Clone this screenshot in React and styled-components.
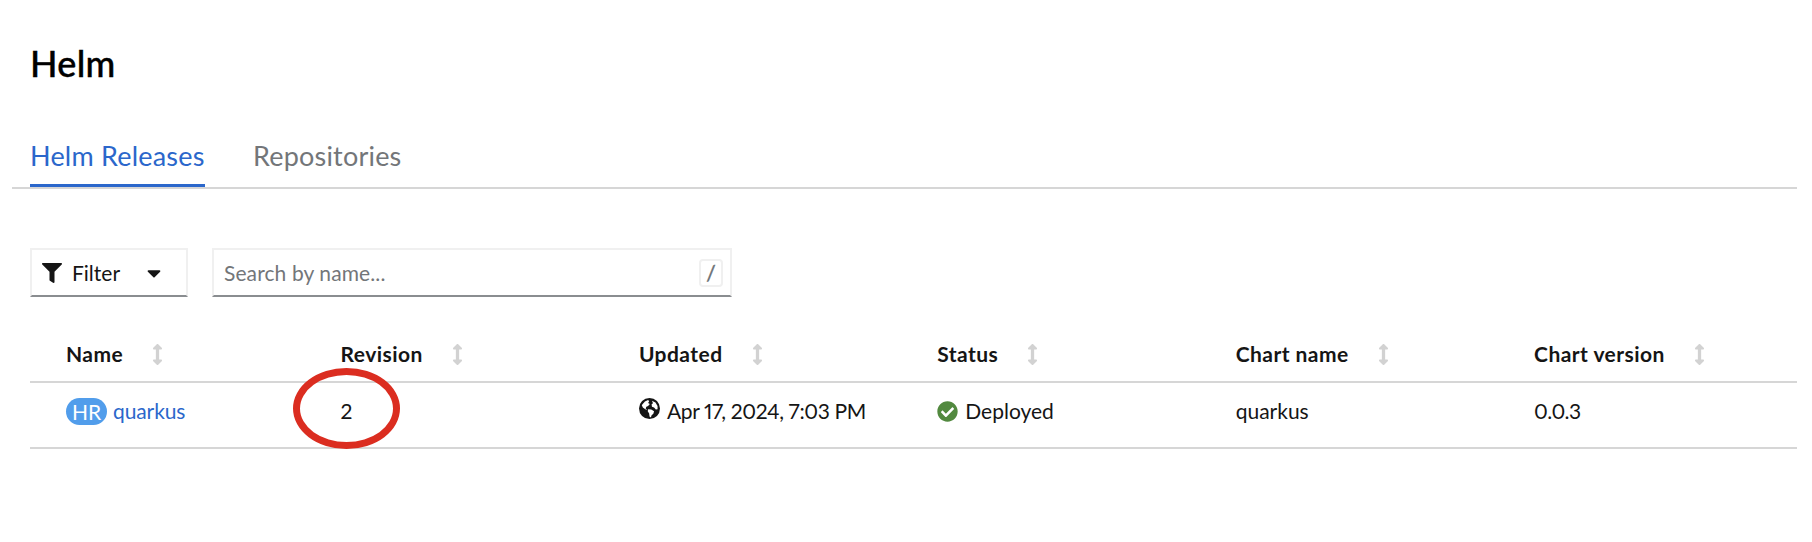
import React from "react";
import styled, { createGlobalStyle } from "styled-components";
import { FaFilter, FaCaretDown, FaArrowsAltV, FaCheckCircle } from "react-icons/fa";

const Global = createGlobalStyle`
  * { box-sizing: border-box; }
  body { margin: 0; background: #fff; color: #151515; font: 21px/32px Lato, sans-serif; font-variant-numeric: proportional-nums; }
`;
const Page = styled.main`padding: 41px 15px 0 12px;`;
const Title = styled.h1`
  margin: 0 0 0 18px; font-size: 36px; font-weight: 500; line-height: 44px; color: #000;
  letter-spacing: .3px; -webkit-text-stroke: .4px #000;
`;
const Tabs = styled.nav`
  display: flex; gap: 48px; margin-top: 40px; padding-left: 18px; height: 64px; border-bottom: 2px solid #d6d6d6;
`;
const Tab = styled.a`
  width: ${p => p.$width}px; height: 62px; padding-top: 11px; font-size: 27px; line-height: 40px;
  letter-spacing: .2px; white-space: nowrap;
  color: ${p => (p.$active ? "#2b67cb" : "#737679")};
  border-bottom: 3px solid ${p => (p.$active ? "#2b67cb" : "transparent")};
`;
const Toolbar = styled.div`display: flex; gap: 24px; margin: 59px 0 0 18px;`;
const Control = styled.div`
  display: flex; align-items: center; height: 49px; width: ${p => p.$width}px; padding: 0 7px 0 10px;
  border: 2px solid #f0f0f0; border-bottom-color: #8a8d90;
`;
const Label = styled.span`margin: 0 23px 0 10px;`;
const Placeholder = styled.span`flex: 1; color: #737679; letter-spacing: .1px;`;
const Key = styled.kbd`
  width: 24px; height: 28px; border: 2px solid #f0f0f0; border-radius: 4px;
  font: 21px/23px Lato, sans-serif; text-align: center; color: #6a6e73; -webkit-text-stroke: .4px #6a6e73;
`;
const Table = styled.div`margin: 23px 0 0 18px;`;
const Row = styled.div`
  display: grid; grid-template-columns: 274.5px 298.4px 298.4px 298.4px 298.4px 1fr; align-items: center;
  height: ${p => p.$height}px; padding: ${p => p.$top || 0}px 0 ${p => p.$bottom || 0}px 36px;
  border-bottom: 2px solid #d6d6d6;
`;
const Head = styled.div`
  display: flex; align-items: center; gap: 24px; font-weight: 700; letter-spacing: .45px;
  svg { color: #d2d2d2; }
`;
const Cell = styled.div`
  display: flex; align-items: center; gap: ${p => p.$gap || 0}px; letter-spacing: ${p => p.$track || 0}px;
`;
const Badge = styled.span`
  width: 41px; height: 27px; border-radius: 14px; background: #519deb; color: #fff;
  text-align: center; line-height: 27px;
`;
const Link = styled.a`color: #2b67cb; letter-spacing: -.1px;`;
const Marked = styled.span`position: relative;`;
const Ring = styled.span`
  position: absolute; left: -48px; top: -27px; width: 107px; height: 81px;
  border: 7px solid #db2d20; border-radius: 50%;
`;
const GlobeSvg = styled.svg`width: 21px; height: 21px; margin-bottom: 6px;`;

const Globe = () => (
  <GlobeSvg viewBox="0 0 60 60">
    <circle cx="30" cy="30" r="30" fill="#151515" />
    <path fill="#fff" d="M10 18 17 10l9-4 3 3-3 5 5 3-5 6-5 2-2 5 5 4-6-2-7-5-3-6z" />
    <path fill="#fff" d="m26 32 9 1 8 5-2 7-5 4-2 7-4-3-1-9-4-6z" />
    <path fill="#fff" d="m37 8 10 5 6 10v9l-5 1-5-6-6-2-1-7 4-3z" />
  </GlobeSvg>
);

const columns = ["Name", "Revision", "Updated", "Status", "Chart name", "Chart version"];

export default function App() {
  return (
    <>
      <Global />
      <Page>
        <Title>Helm</Title>
        <Tabs>
          <Tab $active $width={175}>Helm Releases</Tab>
          <Tab $width={150}>Repositories</Tab>
        </Tabs>
        <Toolbar>
          <Control $width={158}><FaFilter size={20} /><Label>Filter</Label><FaCaretDown size={22} /></Control>
          <Control $width={520}><Placeholder>Search by name...</Placeholder><Key>/</Key></Control>
        </Toolbar>
        <Table>
          <Row $height={63} $top={7}>
            {columns.map(name => <Head key={name}><span>{name}</span><FaArrowsAltV size={21} /></Head>)}
          </Row>
          <Row $height={66} $bottom={8}>
            <Cell $gap={6}><Badge>HR</Badge><Link>quarkus</Link></Cell>
            <Cell><Marked>2<Ring /></Marked></Cell>
            <Cell $gap={7} $track={-0.35}><Globe /><span>Apr 17, 2024, 7:03 PM</span></Cell>
            <Cell $gap={7}><FaCheckCircle size={21} color="#52893f" /><span>Deployed</span></Cell>
            <Cell>quarkus</Cell>
            <Cell $track={-0.5}>0.0.3</Cell>
          </Row>
        </Table>
      </Page>
    </>
  );
}
